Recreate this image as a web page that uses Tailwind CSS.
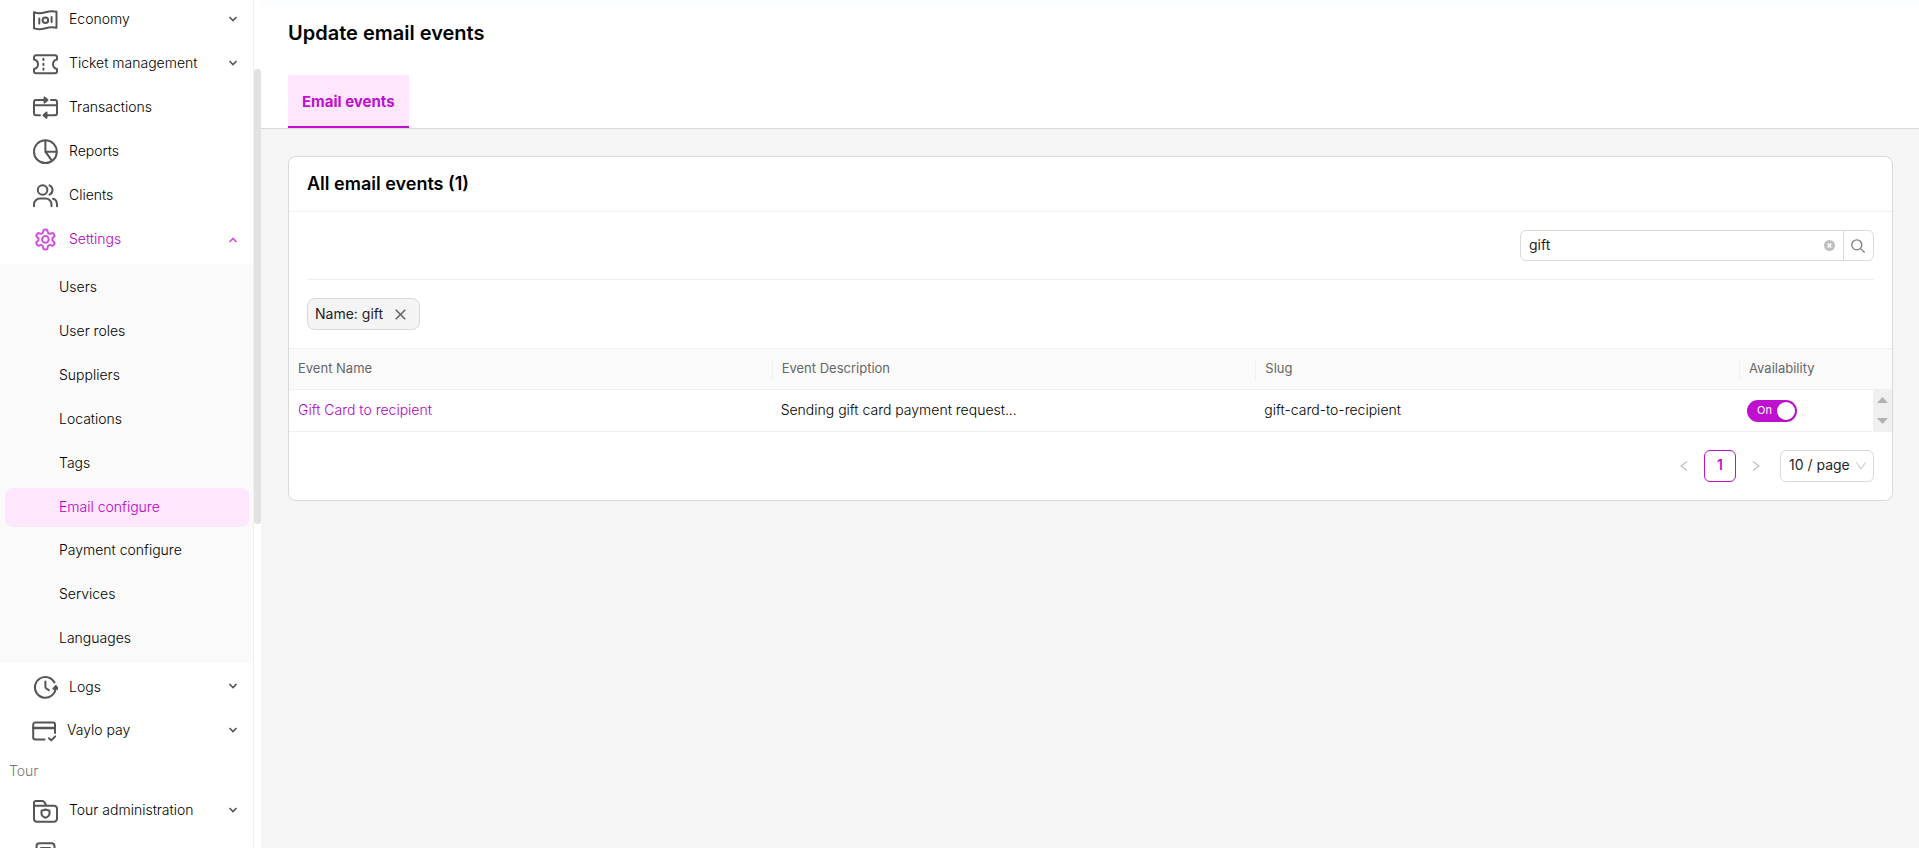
<!DOCTYPE html>
<html lang="en">
<head>
    <meta charset="UTF-8">
    <meta name="viewport" content="width=device-width, initial-scale=1.0">
    <title>Update email events</title>
    <script src="https://cdn.jsdelivr.net/npm/@tailwindcss/browser@4"></script>
</head>
<body class="h-screen overflow-hidden flex bg-[#f5f5f5] font-['Inter',sans-serif] text-sm text-[#1f1f1f]">

    <!-- Shared arrow icon -->
    <svg class="hidden">
        <symbol id="chevron" viewBox="0 0 10 10"><path d="M1.5 3L5 6.5 8.5 3" fill="none" stroke="currentColor" stroke-width="1.6"/></symbol>
    </svg>

    <!-- Sidebar -->
    <aside class="w-[261px] shrink-0 flex bg-white">
        <nav class="flex-1 h-full overflow-hidden border-r border-[#f0f0f0] font-light text-black">
            <ul class="flex flex-col gap-1">
                <li>
                    <button class="w-full h-10 pl-8 pr-[15px] flex items-center gap-[11px]">
                        <svg class="w-[26px] h-[26px] text-[#555]" viewBox="0 0 26 26" fill="none" stroke="currentColor" stroke-width="2" stroke-linecap="round" stroke-linejoin="round">
                            <path d="M2 5.2c4 1.5 8 1 11.5 0s7.5-1.4 11-.4v16c-3.5-1-7.5-.6-11 .4s-7.5 1.5-11.5.2z"/>
                            <circle cx="13.4" cy="13.3" r="2.8"/>
                            <path d="M7.3 11.5v5M19.6 10v5"/>
                        </svg>
                        <span class="flex-1 pb-0.5 text-left">Economy</span>
                        <svg class="w-[10px] h-[10px] mb-0.5 text-[#555]"><use href="#chevron"/></svg>
                    </button>
                </li>
                <li>
                    <button class="w-full h-10 pl-8 pr-[15px] flex items-center gap-[11px]">
                        <svg class="w-[26px] h-[26px] text-[#555]" viewBox="0 0 26 26" fill="none" stroke="currentColor" stroke-width="2" stroke-linecap="round" stroke-linejoin="round">
                            <path d="M4 4.3h19a2 2 0 0 1 2 2v2.2c-2.7.6-4 2.5-4 4.800s1.300 4.200 4 4.800v2.200a2 2 0 0 1-2 2H4a2 2 0 0 1-2-2v-2.200c2.700-.6 4-2.500 4-4.800S4.700 9.100 2 8.500V6.300a2 2 0 0 1 2-2z"/>
                            <path d="M11.400 7.800v1.200M11.400 12.700v1.200M11.400 17.600v1.200"/>
                        </svg>
                        <span class="flex-1 pb-0.5 text-left">Ticket management</span>
                        <svg class="w-[10px] h-[10px] mb-0.5 text-[#555]"><use href="#chevron"/></svg>
                    </button>
                </li>
                <li>
                    <a href="#" class="h-10 pl-8 pr-[15px] flex items-center gap-[11px]">
                        <svg class="w-[26px] h-[26px] text-[#555]" viewBox="0 0 26 26" fill="none" stroke="currentColor" stroke-width="2" stroke-linecap="round" stroke-linejoin="round">
                            <path d="M2 17.500V7a2 2 0 0 1 2-2h9M19 5h4a2 2 0 0 1 2 2v11.200a2 2 0 0 1-2 2h-9M8 20.200H4a2 2 0 0 1-2-2M2 10.300h23"/>
                            <path d="M12.500 2.400L15.500 5l-3 2.600zM14.500 17.600l-3 2.600 3 2.600z" fill="currentColor"/>
                        </svg>
                        <span class="pb-0.5">Transactions</span>
                    </a>
                </li>
                <li>
                    <a href="#" class="h-10 pl-8 pr-[15px] flex items-center gap-[11px]">
                        <svg class="w-[26px] h-[26px] text-[#555]" viewBox="0 0 26 26" fill="none" stroke="currentColor" stroke-width="2">
                            <circle cx="13.400" cy="12.700" r="11.400"/>
                            <path d="M13.400 1.500v11.200h11.200M13.400 12.700l6.600 9.200"/>
                        </svg>
                        <span class="pb-0.5">Reports</span>
                    </a>
                </li>
                <li>
                    <a href="#" class="h-10 pl-8 pr-[15px] flex items-center gap-[11px]">
                        <svg class="w-[26px] h-[26px] text-[#555]" viewBox="0 0 26 26" fill="none" stroke="currentColor" stroke-width="2" stroke-linecap="round">
                            <circle cx="10.600" cy="7" r="4.800"/>
                            <path d="M17.500 2.300c1.900.8 3 2.500 3 4.700s-1.100 3.900-3 4.700M2 23.300v-1.800a6 6 0 0 1 6-6h5.500a6 6 0 0 1 6 6v1.800M21 15.800c2.500.6 4 2.700 4 5.700v1.800"/>
                        </svg>
                        <span class="pb-0.5">Clients</span>
                    </a>
                </li>
                <li>
                    <button class="w-full h-10 pl-8 pr-[15px] flex items-center gap-[11px] text-[#b400c6]">
                        <svg class="w-[26px] h-[26px] text-[#d24fe0]" viewBox="-1.400 -0.400 26 26" fill="none" stroke="currentColor" stroke-width="2" stroke-linecap="round" stroke-linejoin="round">
                            <path d="M12.220 2h-.44a2 2 0 0 0-2 2v.18a2 2 0 0 1-1 1.730l-.43.25a2 2 0 0 1-2 0l-.15-.08a2 2 0 0 0-2.730.73l-.22.38a2 2 0 0 0 .73 2.730l.15.1a2 2 0 0 1 1 1.720v.51a2 2 0 0 1-1 1.740l-.15.09a2 2 0 0 0-.73 2.730l.22.38a2 2 0 0 0 2.730.73l.15-.08a2 2 0 0 1 2 0l.43.25a2 2 0 0 1 1 1.730V20a2 2 0 0 0 2 2h.44a2 2 0 0 0 2-2v-.18a2 2 0 0 1 1-1.730l.43-.25a2 2 0 0 1 2 0l.15.08a2 2 0 0 0 2.730-.73l.22-.39a2 2 0 0 0-.73-2.730l-.15-.08a2 2 0 0 1-1-1.740v-.5a2 2 0 0 1 1-1.740l.15-.09a2 2 0 0 0 .73-2.730l-.22-.38a2 2 0 0 0-2.730-.73l-.15.08a2 2 0 0 1-2 0l-.43-.25a2 2 0 0 1-1-1.730V4a2 2 0 0 0-2-2z"/>
                            <circle cx="12" cy="12" r="3.300"/>
                        </svg>
                        <span class="flex-1 pb-0.5 text-left">Settings</span>
                        <svg class="w-[10px] h-[10px] rotate-180 text-[#d24fe0]"><use href="#chevron"/></svg>
                    </button>
                </li>
            </ul>

            <!-- Settings submenu -->
            <ul class="mt-1 py-1 flex flex-col gap-1 bg-[#fafafa]">
                <li><a href="#" class="h-10 pb-0.5 pl-[59px] flex items-center">Users</a></li>
                <li><a href="#" class="h-10 pb-0.5 pl-[59px] flex items-center">User roles</a></li>
                <li><a href="#" class="h-10 pb-0.5 pl-[59px] flex items-center">Suppliers</a></li>
                <li><a href="#" class="h-10 pb-0.5 pl-[59px] flex items-center">Locations</a></li>
                <li><a href="#" class="h-10 pb-0.5 pl-[59px] flex items-center">Tags</a></li>
                <li><a href="#" class="h-[39px] pb-0.5 ml-[5px] mr-1 pl-[54px] flex items-center rounded-lg bg-[#fee6fd] text-[#b400c6]">Email configure</a></li>
                <li><a href="#" class="h-10 pb-0.5 pl-[59px] flex items-center">Payment configure</a></li>
                <li><a href="#" class="h-10 pb-0.5 pl-[59px] flex items-center">Services</a></li>
                <li><a href="#" class="h-10 pb-0.5 pl-[59px] flex items-center">Languages</a></li>
            </ul>

            <ul class="mt-1 flex flex-col gap-1">
                <li>
                    <button class="w-full h-10 pl-8 pr-[15px] flex items-center gap-[11px]">
                        <svg class="w-[26px] h-[26px] text-[#555]" viewBox="0 0 26 26" fill="none" stroke="currentColor" stroke-width="2" stroke-linecap="round" stroke-linejoin="round">
                            <path d="M22.500 8.500A10.400 10.400 0 1 0 19.800 21.500c2.300-1.800 3.600-4.200 3.900-7"/>
                            <path d="M21.300 14.800l2.500-2.800 2.200 2.800z" fill="currentColor"/>
                            <path d="M13.400 7.500v5.300c0 .8.300 1.300.9 1.700l2.500 1.700"/>
                        </svg>
                        <span class="flex-1 text-left">Logs</span>
                        <svg class="w-[10px] h-[10px] mb-0.5 text-[#555]"><use href="#chevron"/></svg>
                    </button>
                </li>
                <li>
                    <button class="w-full h-10 pl-[30px] pr-[15px] flex items-center gap-[11px]">
                        <svg class="w-[26px] h-[26px] text-[#555]" viewBox="0 0 26 26" fill="none" stroke="currentColor" stroke-width="2" stroke-linecap="round" stroke-linejoin="round">
                            <path d="M14.500 21.500H5.200a2 2 0 0 1-2-2V6.500a2 2 0 0 1 2-2H23a2 2 0 0 1 2 2V15"/>
                            <path d="M3.200 10h21.800" stroke-width="2.400"/>
                            <path d="M19 20.200l2.300 2.200 4-4"/>
                        </svg>
                        <span class="flex-1 pb-0.5 text-left">Vaylo pay</span>
                        <svg class="w-[10px] h-[10px] mb-0.5 text-[#555]"><use href="#chevron"/></svg>
                    </button>
                </li>
            </ul>

            <h2 class="h-[39px] pl-[9px] flex items-center text-[#777]">Tour</h2>

            <ul class="flex flex-col gap-1">
                <li>
                    <button class="w-full h-10 pl-8 pr-[15px] flex items-center gap-[11px]">
                        <svg class="w-[26px] h-[26px] text-[#555]" viewBox="0 0 26 26" fill="none" stroke="currentColor" stroke-width="2" stroke-linecap="round" stroke-linejoin="round">
                            <path d="M2 8.700V6a2 2 0 0 1 2-2h6.500c1 0 1.500.4 2 1.200l1.800 3.500H22a3 3 0 0 1 3 3v10a3 3 0 0 1-3 3H5a3 3 0 0 1-3-3zh12"/>
                            <path d="M13.500 12.500l4 1.300v2.700c0 2-1.500 3.400-4 4.300-2.500-.9-4-2.300-4-4.300v-2.700z"/>
                        </svg>
                        <span class="flex-1 text-left">Tour administration</span>
                        <svg class="w-[10px] h-[10px] text-[#555]"><use href="#chevron"/></svg>
                    </button>
                </li>
                <li>
                    <button aria-label="Tour bookings" class="w-full h-10 pl-8 pr-[15px] flex items-center">
                        <svg class="w-[26px] h-[26px] text-[#555]" viewBox="0 0 26 26" fill="none" stroke="currentColor" stroke-width="2" stroke-linecap="round">
                            <rect x="4.500" y="2.300" width="18" height="22" rx="3"/>
                            <path d="M9 7h9"/>
                        </svg>
                    </button>
                </li>
            </ul>
        </nav>
        <!-- Scrollbar -->
        <div class="w-[7px] pt-[69px]">
            <div class="h-[455px] rounded-[3px] bg-[#e2e2e2]"></div>
        </div>
    </aside>

    <main class="flex-1 min-w-0">
        <!-- Page header -->
        <header class="h-[129px] px-[27px] flex flex-col border-b border-[#d9d9d9] bg-linear-to-b from-[#fafcfe] to-white to-[10px]">
            <h1 class="pt-[18px] text-xl leading-[30px] font-semibold text-black">Update email events</h1>
            <div class="flex mt-auto">
                <a href="#" class="h-[53px] pt-0.5 px-[14px] flex items-center border-b-2 border-[#bf10d0] bg-[#fee6fd] text-[15px] font-bold text-[#bf10d0]">Email events</a>
            </div>
        </header>

        <section class="mt-[27px] ml-[27px] mr-[26px] border border-[#d9d9d9] rounded-lg bg-white overflow-hidden">
            <h2 class="h-[55px] px-[18px] flex items-center border-b border-[#f0f0f0] text-lg font-semibold text-black">All email events (1)</h2>

            <!-- Search and active filters -->
            <div class="px-[18px]">
                <form class="py-[18px] flex justify-end border-b border-[#f0f0f0]">
                    <div class="w-[354px] h-[31px] flex border border-[#d9d9d9] rounded-md">
                        <input type="text" value="gift" aria-label="Search events" class="flex-1 min-w-0 px-2 pb-0.5 outline-none">
                        <button type="button" aria-label="Clear search" class="w-7 flex items-center justify-center text-[#bfbfbf]">
                            <svg class="w-[11px] h-[11px]" viewBox="0 0 11 11">
                                <circle cx="5.500" cy="5.500" r="5.500" fill="currentColor"/>
                                <path d="M3.700 3.500l3.600 4M7.300 3.500l-3.600 4" stroke="white" stroke-width="1.300"/>
                            </svg>
                        </button>
                        <button type="button" aria-label="Search" class="w-[30px] pr-0.5 flex items-center justify-center border-l border-[#d9d9d9] text-[#7c7c7c]">
                            <svg class="w-[14px] h-[14px]" viewBox="0 0 14 14" fill="none" stroke="currentColor" stroke-width="1.300">
                                <circle cx="5.800" cy="5.800" r="5"/>
                                <path d="M9.400 9.400l4.200 4.200"/>
                            </svg>
                        </button>
                    </div>
                </form>
                <div class="py-[18px] flex">
                    <div class="h-8 pl-[7px] pr-[13px] flex items-center gap-3 border border-[#d9d9d9] rounded-lg bg-[#f4f4f4]">
                        <span>Name: gift</span>
                        <button type="button" aria-label="Remove filter">
                            <svg class="block w-[11px] h-[11px] text-[#666]" viewBox="0 0 11 11" fill="none" stroke="currentColor" stroke-width="1.600"><path d="M.7.7l9.600 9.600M10.300.7L.7 10.300"/></svg>
                        </button>
                    </div>
                </div>
            </div>

            <table class="w-full table-fixed text-left">
                <colgroup>
                    <col>
                    <col>
                    <col>
                    <col class="w-[152px]">
                </colgroup>
                <thead>
                    <tr class="h-[41px] border-y border-[#f0f0f0] bg-[#fafafa] text-[13px] text-[#666]">
                        <th class="p-0 font-normal"><div class="h-[21px] px-[9px] leading-[18px] border-r border-[#f0f0f0]">Event Name</div></th>
                        <th class="p-0 font-normal"><div class="h-[21px] px-[9px] leading-[18px] border-r border-[#f0f0f0]">Event Description</div></th>
                        <th class="p-0 font-normal"><div class="h-[21px] px-[9px] leading-[18px] border-r border-[#f0f0f0]">Slug</div></th>
                        <th class="p-0 font-normal"><div class="h-[21px] px-[9px] leading-[18px]">Availability</div></th>
                    </tr>
                </thead>
                <tbody>
                    <tr class="h-[42px] border-b border-[#f0f0f0] font-light text-black">
                        <td class="px-[9px] pb-0.5"><a href="#" class="text-[#b400c6]">Gift Card to recipient</a></td>
                        <td class="px-2 pb-0.5">Sending gift card payment request...</td>
                        <td class="px-2 pb-0.5">gift-card-to-recipient</td>
                        <td class="relative pl-[7px]">
                            <button role="switch" aria-checked="true" aria-label="Availability" class="w-[50px] h-[22px] pl-[10px] pr-[2px] flex items-center justify-between rounded-full bg-[#bf10d0] text-[11px] font-normal text-white">
                                On
                                <span class="w-[18px] h-[18px] rounded-full bg-white shadow-sm"></span>
                            </button>
                            <div class="absolute right-0 inset-y-0 w-[19px] py-[7px] flex flex-col items-center justify-between bg-[#f0f0f0] text-[#b3b3b3]">
                                <svg class="w-[11px] h-[6px]" viewBox="0 0 11 6"><path d="M0 6l5.500-6L11 6z" fill="currentColor"/></svg>
                                <svg class="w-[11px] h-[6px]" viewBox="0 0 11 6"><path d="M0 0l5.500 6L11 0z" fill="currentColor"/></svg>
                            </div>
                        </td>
                    </tr>
                </tbody>
            </table>

            <!-- Pagination -->
            <div class="p-[18px] flex items-center justify-end">
                <button aria-label="Previous page" class="w-8 h-8 mr-1 flex items-center justify-center text-[#bfbfbf]">
                    <svg class="w-[10px] h-[10px]" viewBox="0 0 10 10" fill="none" stroke="currentColor" stroke-width="1.200"><path d="M8 .5L2 5l6 4.500"/></svg>
                </button>
                <button class="w-8 h-8 pb-0.5 border border-[#bf10d0] rounded-md font-semibold text-[#bf10d0]">1</button>
                <button aria-label="Next page" class="w-8 h-8 ml-1 mr-2 flex items-center justify-center text-[#bfbfbf]">
                    <svg class="w-[10px] h-[10px]" viewBox="0 0 10 10" fill="none" stroke="currentColor" stroke-width="1.200"><path d="M2 .5L8 5l-6 4.500"/></svg>
                </button>
                <div class="relative">
                    <select aria-label="Rows per page" class="w-[94px] h-8 pb-0.5 pl-2 appearance-none border border-[#d9d9d9] rounded-md bg-white">
                        <option>10 / page</option>
                        <option>20 / page</option>
                        <option>50 / page</option>
                    </select>
                    <svg class="absolute right-2 top-[11px] w-[10px] h-[10px] text-[#bfbfbf] pointer-events-none" viewBox="0 0 10 10" fill="none" stroke="currentColor"><path d="M.5 1.500L5 8l4.500-6.500"/></svg>
                </div>
            </div>
        </section>
    </main>
</body>
</html>
